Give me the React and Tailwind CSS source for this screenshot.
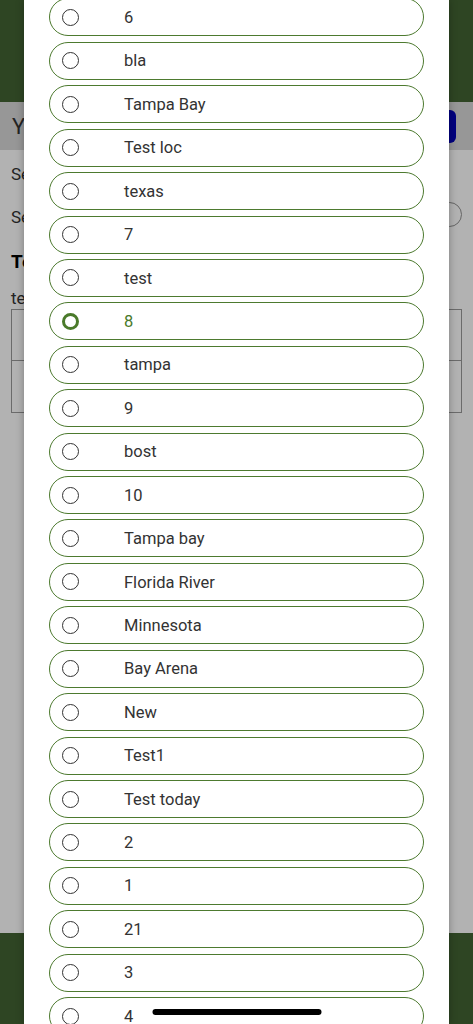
const options = [
  '6', 'bla', 'Tampa Bay', 'Test loc', 'texas', '7', 'test', '8', 'tampa', '9', 'bost', '10',
  'Tampa bay', 'Florida River', 'Minnesota', 'Bay Arena', 'New', 'Test1', 'Test today',
  '2', '1', '21', '3', '4',
];

function App() {
  const selected = '8';

  return (
    <div className="relative w-full h-[1024px] overflow-hidden flex flex-col bg-white font-['Roboto',sans-serif]">
      {/* page underneath */}
      <div className="h-[102px] bg-[#436433]" />
      <div className="h-[48px] bg-[#d8d8d8] flex items-center justify-between pl-3 pr-[17px]">
        <span className="text-[22px] text-[#333]">Your Locations</span>
        <button className="h-[33px] w-[90px] rounded-md bg-[#0000b7] text-white text-sm">Add</button>
      </div>
      <div className="flex-1 px-[11px] pt-[12px] text-[#333]">
        <div className="h-[43px] text-[17px]">Select a location</div>
        <div className="h-[43px] flex justify-between items-start text-[17px]">
          <span>Select all</span>
          <span className="-mt-[3px] w-[25px] h-[25px] rounded-full border-[1.5px] border-[#929292]" />
        </div>
        <div className="h-[40px] text-[19px] font-bold text-black">Test</div>
        <div className="text-[17px] leading-[21px]">test</div>
        <div className="border border-[#9a9a9a] h-[104px] flex flex-col">
          <div className="h-[51px] border-b border-[#9a9a9a]" />
        </div>
      </div>
      <div className="h-[91px] bg-[#436433]" />

      {/* dim layer */}
      <div className="absolute inset-0 bg-black/30" />

      {/* location picker */}
      <div className="absolute top-0 bottom-0 left-[24px] w-[425px] bg-white shadow-[0_0_8px_rgba(0,0,0,0.3)] overflow-hidden">
        <div className="flex flex-col gap-[5.43px] px-[25px] -mt-[1.6px]">
          {options.map((o, i) => {
            const on = o === selected;
            return (
              <div key={i} className="h-[38px] shrink-0 rounded-full border border-[#4d7a2f] flex items-center pl-[12px]">
                <span
                  className={`w-[17px] h-[17px] rounded-full shrink-0 ${on ? 'border-[3.5px] border-[#4a7a2a]' : 'border-[1.5px] border-[#333]'}`}
                />
                <span className={`ml-[45px] pt-[2px] text-[16.5px] ${on ? 'text-[#4a7a2a]' : 'text-[#333]'}`}>{o}</span>
              </div>
            );
          })}
        </div>
      </div>

      {/* home indicator */}
      <div className="absolute bottom-[9px] left-1/2 -translate-x-1/2 w-[169px] h-[6px] rounded-full bg-black" />
    </div>
  );
}

export default App;
